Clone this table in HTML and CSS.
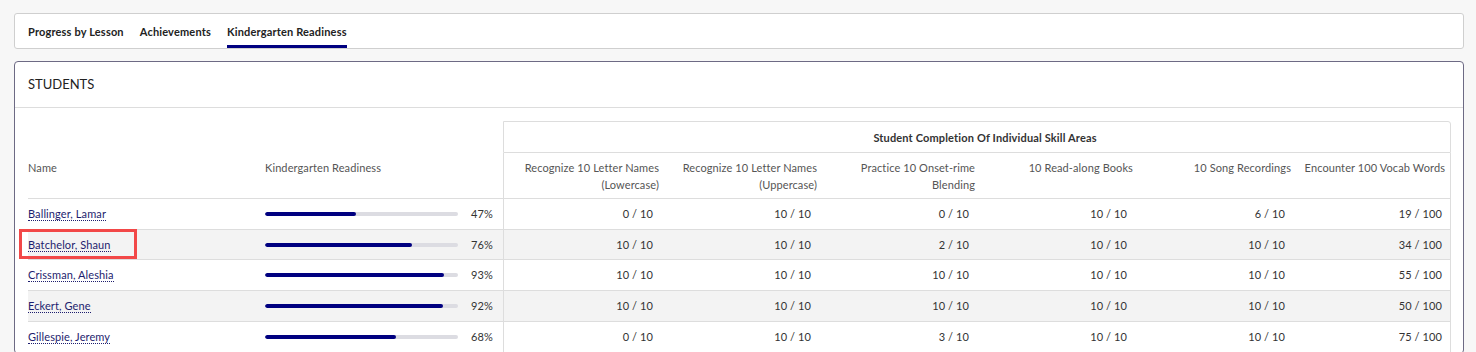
FILE: index.html
```html
<!DOCTYPE html>
<html>
<head>
<meta charset="utf-8">
<link rel="stylesheet" href="styles.css">
</head>
<body>
<nav class="tabs">
  <a class="tab">Progress by Lesson</a>
  <a class="tab">Achievements</a>
  <a class="tab active">Kindergarten Readiness</a>
</nav>
<section class="card">
  <header class="card-head">STUDENTS</header>
  <div class="card-body">
    <table class="grid">
      <colgroup>
        <col class="c-name"><col class="c-ready">
        <col class="c-skill"><col class="c-skill"><col class="c-skill"><col class="c-skill"><col class="c-skill"><col class="c-skill">
      </colgroup>
      <thead>
        <tr>
          <th class="blank"></th><th class="blank"></th>
          <th class="group" colspan="6">Student Completion Of Individual Skill Areas</th>
        </tr>
        <tr class="sub">
          <th class="h-name">Name</th>
          <th class="h-ready">Kindergarten Readiness</th>
          <th class="h-skill first">Recognize 10 Letter Names (Lowercase)</th>
          <th class="h-skill">Recognize 10 Letter Names (Uppercase)</th>
          <th class="h-skill">Practice 10 Onset-rime Blending</th>
          <th class="h-skill">10 Read-along Books</th>
          <th class="h-skill">10 Song Recordings</th>
          <th class="h-skill last">Encounter 100 Vocab Words</th>
        </tr>
      </thead>
      <tbody>
        <tr>
          <td class="name"><a class="student">Ballinger, Lamar</a></td>
          <td class="ready"><div class="meter"><div class="track"><div class="fill" style="width:47%"></div></div><span class="pct">47%</span></div></td>
          <td class="val first">0 / 10</td><td class="val">10 / 10</td><td class="val">0 / 10</td><td class="val">10 / 10</td><td class="val">6 / 10</td><td class="val last">19 / 100</td>
        </tr>
        <tr class="alt">
          <td class="name marked"><a class="student">Batchelor, Shaun</a></td>
          <td class="ready"><div class="meter"><div class="track"><div class="fill" style="width:76%"></div></div><span class="pct">76%</span></div></td>
          <td class="val first">10 / 10</td><td class="val">10 / 10</td><td class="val">2 / 10</td><td class="val">10 / 10</td><td class="val">10 / 10</td><td class="val last">34 / 100</td>
        </tr>
        <tr>
          <td class="name"><a class="student">Crissman, Aleshia</a></td>
          <td class="ready"><div class="meter"><div class="track"><div class="fill" style="width:93%"></div></div><span class="pct">93%</span></div></td>
          <td class="val first">10 / 10</td><td class="val">10 / 10</td><td class="val">10 / 10</td><td class="val">10 / 10</td><td class="val">10 / 10</td><td class="val last">55 / 100</td>
        </tr>
        <tr class="alt">
          <td class="name"><a class="student">Eckert, Gene</a></td>
          <td class="ready"><div class="meter"><div class="track"><div class="fill" style="width:92%"></div></div><span class="pct">92%</span></div></td>
          <td class="val first">10 / 10</td><td class="val">10 / 10</td><td class="val">10 / 10</td><td class="val">10 / 10</td><td class="val">10 / 10</td><td class="val last">50 / 100</td>
        </tr>
        <tr>
          <td class="name"><a class="student">Gillespie, Jeremy</a></td>
          <td class="ready"><div class="meter"><div class="track"><div class="fill" style="width:68%"></div></div><span class="pct">68%</span></div></td>
          <td class="val first">0 / 10</td><td class="val">10 / 10</td><td class="val">3 / 10</td><td class="val">10 / 10</td><td class="val">10 / 10</td><td class="val last">75 / 100</td>
        </tr>
      </tbody>
    </table>
  </div>
</section>
</body>
</html>
```
FILE: styles.css
```css
* { box-sizing: border-box; }
html, body { margin: 0; }
body {
  background: #f7f7f7;
  padding: 13px 12px 0 14px;
  font-family: Lato, "Open Sans", sans-serif;
  color: #333;
}
.tabs {
  display: flex;
  gap: 16px;
  background: #fff;
  border: 1px solid #cfcfcf;
  border-radius: 3px;
  padding: 0 13px;
}
.tab {
  font-size: 11px;
  font-weight: 700;
  letter-spacing: 0.17px;
  line-height: 14px;
  color: #222;
  padding: 11px 0 6px;
  border-bottom: 3px solid transparent;
}
.tab.active { border-bottom-color: #000080; }

.card {
  margin-top: 12px;
  background: #fff;
  border: 1px solid #6d6a84;
  border-radius: 4px;
}
.card-head {
  padding: 14px 13px 15px;
  font-size: 13px;
  line-height: 16px;
  color: #222;
  border-bottom: 1px solid #ddd;
}
.card-body { padding: 13px 12px 0 13px; }

.grid {
  border-collapse: separate;
  border-spacing: 0;
  table-layout: fixed;
  width: 1423px;
  font-size: 11px;
  letter-spacing: 0.1px;
}
.c-name { width: 227px; }
.c-ready { width: 248px; }
.c-skill { width: 158px; }

th { font-weight: 400; color: #555; }
.blank { border: 0; padding: 0; }
.group {
  font-weight: 700;
  letter-spacing: 0.15px;
  color: #333;
  border: 1px solid #ddd;
  border-top-right-radius: 3px;
  line-height: 17px;
  padding: 7px 0 6px 16px;
  text-align: center;
}
.sub th {
  vertical-align: top;
  line-height: 17px;
  padding: 6px 2px 5px 0;
  border-bottom: 1px solid #ddd;
  text-align: right;
}
.sub .h-name { text-align: left; padding-left: 0; }
.sub .h-ready { text-align: left; padding-left: 10px; }
.sub .first { border-left: 1px solid #ddd; }
.sub .last { border-right: 1px solid #ddd; padding-right: 5px; padding-left: 6px; }

td {
  line-height: 15.7px;
  padding: 7px 8px 7px 0;
  border-bottom: 1px solid #ddd;
  white-space: nowrap;
}
tr.alt td { background: #f3f3f3; }
td.val { text-align: right; color: #333; }
td.first { border-left: 1px solid #ddd; }
td.last { border-right: 1px solid #ddd; }
td.ready { padding: 7px 10px; }

.student {
  color: #1d1d6e;
  text-decoration: none;
  border-bottom: 1px dotted #1d1d6e;
}
td.marked { position: relative; }
td.marked::after {
  content: "";
  position: absolute;
  left: -9px;
  top: -1px;
  width: 112px;
  bottom: 0;
  border: 3px solid #f24848;
}

.meter { display: flex; align-items: center; }
.track {
  flex: 1;
  height: 4px;
  border-radius: 2px;
  background: #dcdce2;
  overflow: hidden;
}
.fill { height: 100%; background: #000080; border-radius: 2px; }
.pct { width: 23px; margin-left: 12px; text-align: right; color: #333; }
```
